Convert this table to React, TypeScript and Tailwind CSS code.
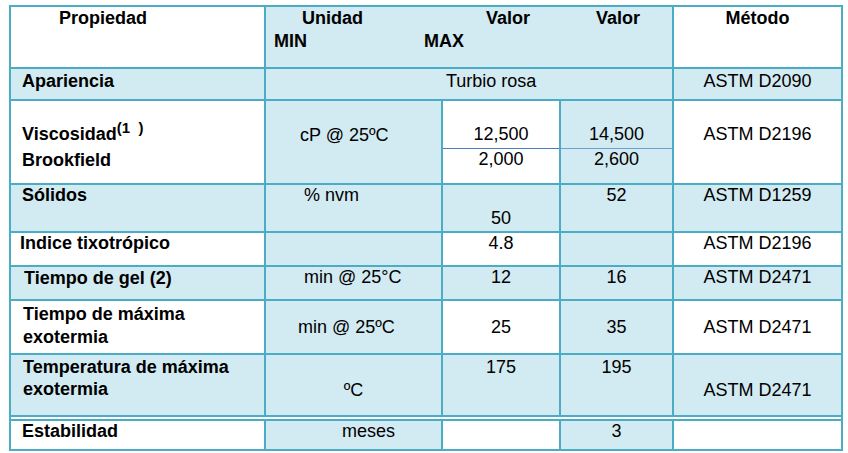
import React from "react";

const B = "bg-[#d2eaf1]";
const W = "bg-white";

export default function App() {
  return (
    <div className="min-h-screen w-full bg-white font-['Liberation_Sans',Arial,sans-serif] text-[18px] text-black">
      <div className="pt-[5px] pl-[9px]">
        <div className="w-[834px]">
          <div className="grid grid-cols-[253px_175px_116px_111px_167px] grid-rows-[60px_30px_82px_46px_32px_32px_52px_60px] gap-[2px] bg-[#4bacc6] p-[2px]">
            {/* Header */}
            <div className={`${W} pl-[48px] font-bold leading-[23px]`}>Propiedad</div>
            <div className={`${B} col-span-3 font-bold leading-[23px]`}>
              <div className="flex pl-[36px]">
                <span className="w-[184px]">Unidad</span>
                <span className="w-[110px]">Valor</span>
                <span>Valor</span>
              </div>
              <div className="flex pl-[8px]">
                <span className="w-[150px]">MIN</span>
                <span>MAX</span>
              </div>
            </div>
            <div className={`${W} text-center font-bold leading-[23px]`}>Método</div>

            {/* Apariencia */}
            <div className={`${B} pl-[11px] pt-[1px] font-bold leading-[23px]`}>Apariencia</div>
            <div className={`${B} col-span-3 pl-[180px] pt-[1px] leading-[23px]`}>Turbio rosa</div>
            <div className={`${B} pt-[1px] text-center leading-[23px]`}>ASTM D2090</div>

            {/* Viscosidad */}
            <div className={`${W} pl-[11px] pt-[19px] font-bold leading-[26px]`}>
              <div>
                Viscosidad
                <span className="whitespace-pre align-[7px] text-[15px] leading-none">(1  )</span>
              </div>
              <div>Brookfield</div>
            </div>
            <div className={`${B} pl-[34px] pt-[23px] leading-[23px]`}>cP @ 25ºC</div>
            <div className={`${W} pt-[22px] text-center`}>
              <div className="leading-[23px]">12,500</div>
              <div className="mt-[1.5px] h-[1.5px] bg-[#4a7ebb]" />
              <div className="leading-[20px]">2,000</div>
            </div>
            <div className={`${B} pt-[22px] text-center`}>
              <div className="leading-[23px]">14,500</div>
              <div className="mt-[1.5px] h-px bg-[#6f9fd8]" />
              <div className="mt-[0.5px] leading-[20px]">2,600</div>
            </div>
            <div className={`${W} pt-[22px] text-center leading-[23px]`}>ASTM D2196</div>

            {/* Sólidos */}
            <div className={`${B} pl-[11px] font-bold leading-[21px]`}>Sólidos</div>
            <div className={`${B} pl-[38px] leading-[21px]`}>% nvm</div>
            <div className={`${B} pt-[22.5px] text-center leading-[21px]`}>50</div>
            <div className={`${B} text-center leading-[21px]`}>52</div>
            <div className={`${B} text-center leading-[21px]`}>ASTM D1259</div>

            {/* Indice */}
            <div className={`${W} pl-[9px] font-bold leading-[20px]`}>Indice tixotrópico</div>
            <div className={B} />
            <div className={`${W} text-center leading-[20px]`}>4.8</div>
            <div className={B} />
            <div className={`${W} text-center leading-[20px]`}>ASTM D2196</div>

            {/* Tiempo de gel */}
            <div className={`${B} pl-[13px] pt-[1px] font-bold leading-[20px]`}>Tiempo de gel (2)</div>
            <div className={`${B} pl-[38px] leading-[20px]`}>min @ 25°C</div>
            <div className={`${B} text-center leading-[20px]`}>12</div>
            <div className={`${B} text-center leading-[20px]`}>16</div>
            <div className={`${B} text-center leading-[20px]`}>ASTM D2471</div>

            {/* Tiempo de máxima exotermia */}
            <div className={`${W} pl-[12px] pt-[2px] font-bold leading-[22.6px]`}>
              <div>Tiempo de máxima</div>
              <div>exotermia</div>
            </div>
            <div className={`${B} pl-[32px] pt-[15px] leading-[23px]`}>min @ 25ºC</div>
            <div className={`${W} pt-[15px] text-center leading-[23px]`}>25</div>
            <div className={`${B} pt-[15px] text-center leading-[23px]`}>35</div>
            <div className={`${W} pt-[15px] text-center leading-[23px]`}>ASTM D2471</div>

            {/* Temperatura de máxima exotermia */}
            <div className={`${B} pl-[12px] pt-[1px] font-bold leading-[22px]`}>
              <div>Temperatura de máxima</div>
              <div>exotermia</div>
            </div>
            <div className={`${B} pt-[23.5px] text-center leading-[22px]`}>ºC</div>
            <div className={`${B} pt-[1px] text-center leading-[22px]`}>175</div>
            <div className={`${B} pt-[1px] text-center leading-[22px]`}>195</div>
            <div className={`${B} pt-[23.5px] text-center leading-[22px]`}>ASTM D2471</div>
          </div>

          <div className="h-[2px] border-x-2 border-[#4bacc6] bg-white" />

          <div className="grid grid-cols-[253px_175px_116px_111px_167px] grid-rows-[28px] gap-[2px] bg-[#4bacc6] p-[2px]">
            <div className={`${W} pl-[11px] font-bold leading-[21px]`}>Estabilidad</div>
            <div className={`${B} pl-[76px] leading-[21px]`}>meses</div>
            <div className={W} />
            <div className={`${B} text-center leading-[21px]`}>3</div>
            <div className={W} />
          </div>
        </div>
      </div>
    </div>
  );
}
